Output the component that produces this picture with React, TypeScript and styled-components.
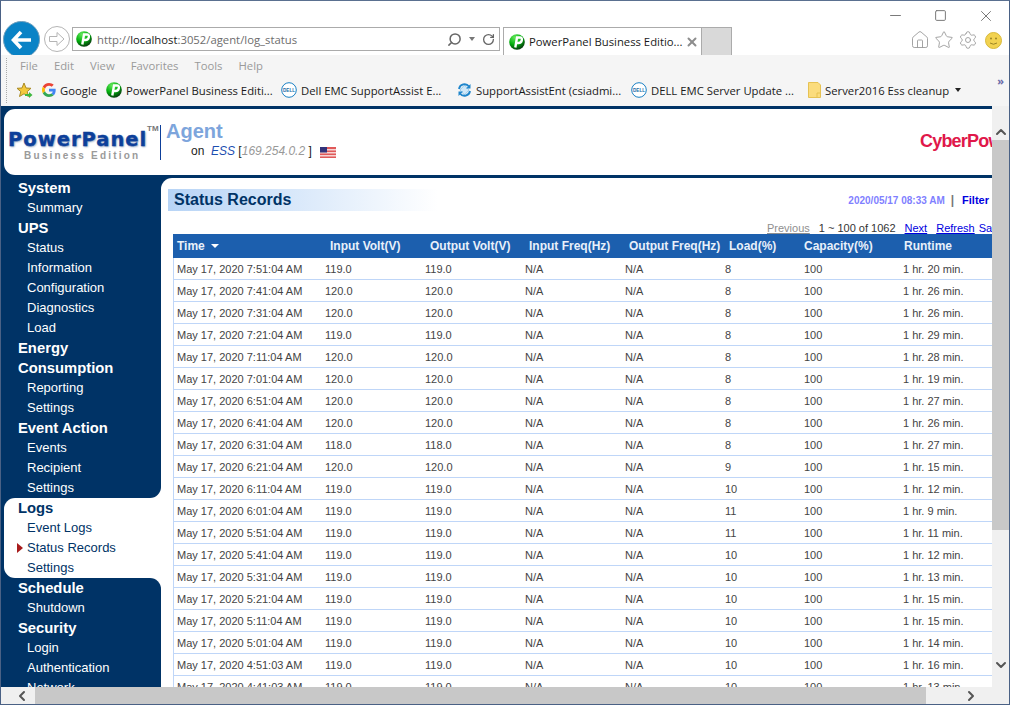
import React from "react";
import styled, { createGlobalStyle } from "styled-components";
import { Home, Star, Settings, Search, RotateCw, ChevronUp, ChevronDown, ChevronLeft, ChevronRight, Minus, Square, X } from "lucide-react";

const GlobalStyle = createGlobalStyle`
  html, body { margin: 0; padding: 0; background: #fff; overflow: hidden; }
  * { box-sizing: border-box; }
`;

const Frame = styled.div`
  width: 1010px;
  height: 705px;
  display: flex;
  flex-direction: column;
  border: 1px solid #4a6185;
  border-top-color: #5a7090;
  overflow: hidden;
  background: #fff;
  font-family: "Liberation Sans", Arial, sans-serif;
`;

/* browser chrome */
const TopBar = styled.div`
  height: 54px;
  flex-shrink: 0;
  display: flex;
  justify-content: space-between;
  overflow: hidden;
  font-family: "Open Sans", "Noto Sans", sans-serif;
`;

const NavCluster = styled.div`
  display: flex;
  align-items: flex-start;
  padding: 20px 0 0 2px;
`;

const BackButton = styled.div`
  width: 37px;
  height: 37px;
  border-radius: 50%;
  background: #0a83c6;
  border: 1px solid #6f9fbd;
  display: flex;
  align-items: center;
  justify-content: center;
`;

const ForwardButton = styled.div`
  width: 26px;
  height: 26px;
  margin: 5px 2px 0 4px;
  border-radius: 50%;
  border: 1px solid #b5b5b5;
  display: flex;
  align-items: center;
  justify-content: center;
`;

const AddressBar = styled.div`
  width: 428px;
  height: 24px;
  margin-top: 6px;
  border: 1px solid #ababab;
  display: flex;
  align-items: center;
  padding: 0 4px 0 3px;
  font-size: 11.3px;
  color: #6d6d6d;
  gap: 5px;
`;

const Url = styled.span`
  flex: 1;
  white-space: nowrap;
  b { color: #1a1a1a; font-weight: 400; }
`;

const AddressTool = styled.span`
  display: flex;
  align-items: center;
  color: #666;
`;

const Caret = styled.span<{ $color?: string }>`
  width: 0;
  height: 0;
  border-left: 3.5px solid transparent;
  border-right: 3.5px solid transparent;
  border-top: 4px solid ${(p) => p.$color || "#777"};
  margin: 0 7px;
`;

const FavCaret = styled(Caret)`
  margin: 0 0 0 2px;
`;

const Tab = styled.div`
  width: 199px;
  height: 28px;
  margin: 6px 0 0 3px;
  border: 1px solid #ababab;
  border-bottom: none;
  background: #fff;
  display: flex;
  align-items: center;
  padding: 0 5px;
  gap: 4px;
  font-size: 11.3px;
  color: #1a1a1a;
  white-space: nowrap;
`;

const TabClose = styled.span`
  margin-left: -2px;
  display: flex;
  color: #8d8d8d;
`;

const NewTab = styled.div`
  width: 30px;
  height: 28px;
  margin-top: 6px;
  background: #d9d9d9;
  border: 1px solid #ababab;
  border-width: 1px 1px 0 0;
`;

const RightCluster = styled.div`
  display: flex;
  flex-direction: column;
  align-items: flex-end;
`;

const WindowControls = styled.div`
  display: flex;
  height: 29px;
  padding-right: 1px;
  color: #7a7a7a;
`;

const WindowButton = styled.div`
  width: 45px;
  display: flex;
  align-items: center;
  justify-content: center;
`;

const ToolIcons = styled.div`
  display: flex;
  align-items: center;
  gap: 4px;
  color: #9b9b9b;
  padding-right: 7px;
`;

const SmileySvg = styled.svg`
  margin-left: 3px;
`;

const ToolBars = styled.div`
  height: 51px;
  flex-shrink: 0;
  background: #f5f5f5;
  padding-left: 19px;
  position: relative;
  font-family: "Open Sans", "Noto Sans", sans-serif;
  font-size: 11.3px;
`;

const Gripper = styled.div`
  position: absolute;
  left: 5px;
  top: 3px;
  bottom: 3px;
  border-left: 1px dotted #aaa;
`;

const MenuRow = styled.div`
  height: 21px;
  display: flex;
  align-items: center;
  gap: 16px;
  color: #9a9a9a;
`;

const FavRow = styled.div`
  height: 28px;
  margin-left: -4px;
  display: flex;
  align-items: center;
  color: #1a1a1a;
  white-space: nowrap;
`;

const FavItem = styled.div<{ $width: number }>`
  width: ${(p) => p.$width}px;
  display: flex;
  align-items: center;
  gap: 4px;
  flex-shrink: 0;
`;

const Overflow = styled.span`
  position: absolute;
  right: 5px;
  top: 18px;
  font-size: 11px;
  color: #6a6aa8;
  font-weight: 700;
`;

/* page */
const PageRow = styled.div`
  flex: 1;
  min-height: 0;
  display: flex;
`;

const Page = styled.div`
  flex: 1;
  min-width: 0;
  background: #003366;
  padding-top: 3px;
  display: flex;
  flex-direction: column;
  overflow: hidden;
`;

const Header = styled.div`
  height: 66px;
  flex-shrink: 0;
  margin: 0 0 3px 3px;
  background: #fff;
  border-radius: 11px 0 0 11px;
  display: flex;
  align-items: flex-start;
`;

const Logo = styled.div`
  width: 156px;
  padding: 21px 0 0 4px;
  position: relative;
`;

const LogoName = styled.div`
  font-family: "DejaVu Sans", sans-serif;
  font-weight: 700;
  font-size: 19.5px;
  letter-spacing: 1px;
  line-height: 20px;
  color: #0d3f9a;
  -webkit-text-stroke: 0.4px #0d3f9a;
  text-shadow: 1px 1px 2px #8fa3c0;
  white-space: nowrap;
`;

const Trademark = styled.span`
  position: absolute;
  left: 143px;
  top: 15px;
  font-size: 8px;
  font-weight: 700;
  color: #777;
`;

const LogoEdition = styled.div`
  font-size: 10px;
  font-weight: 700;
  letter-spacing: 2.2px;
  line-height: 11px;
  color: #9a9a9a;
  white-space: nowrap;
  padding-left: 16px;
`;

const LogoRule = styled.div`
  width: 1px;
  height: 35px;
  margin-top: 16px;
  background: #0d3f9a;
`;

const AgentBlock = styled.div`
  padding: 11px 0 0 5px;
`;

const AgentTitle = styled.div`
  font-size: 20px;
  font-weight: 700;
  line-height: 23px;
  color: #7da5dc;
`;

const AgentLine = styled.div`
  display: flex;
  align-items: center;
  padding: 1px 0 0 25px;
  font-size: 12px;
  line-height: 14px;
  color: #222;
  white-space: pre;
  em { color: #1c4fb0; }
`;

const AgentIp = styled.em`
  && { color: #999; }
`;

const Flag = styled.svg`
  margin: 3px 0 0 8px;
`;

const CyberLogo = styled.div`
  margin: 20px 0 0 auto;
  width: 72px;
  overflow: hidden;
  white-space: nowrap;
  font-size: 18px;
  line-height: 24px;
  font-weight: 700;
  letter-spacing: -0.8px;
  color: #e0184a;
`;

const Body = styled.div`
  flex: 1;
  min-height: 0;
  display: flex;
`;

const Sidebar = styled.div`
  width: 160px;
  flex-shrink: 0;
  background: #fff;
  overflow: hidden;
`;

const NavGroup = styled.div<{ $round?: string }>`
  background: #003366;
  border-radius: ${(p) => p.$round || "0"};
  padding-left: 17px;
  color: #fff;
`;

const ActiveBack = styled.div`
  background: #003366;
  padding-left: 3px;
`;

const ActiveGroup = styled.div`
  background: #fff;
  border-radius: 11px 0 0 11px;
  padding-left: 14px;
  color: #003366;
`;

const NavTitle = styled.div`
  height: 20px;
  line-height: 20px;
  font-size: 14.8px;
  font-weight: 700;
  white-space: nowrap;
`;

const NavLink = styled.div`
  height: 20px;
  line-height: 19px;
  font-size: 13px;
  padding-left: 9px;
  white-space: nowrap;
  position: relative;
`;

const Marker = styled.span`
  position: absolute;
  left: -1px;
  top: 5px;
  border-left: 6px solid #a81c1c;
  border-top: 5px solid transparent;
  border-bottom: 5px solid transparent;
`;

const Main = styled.div`
  flex: 1;
  min-width: 0;
  background: #fff;
  border-radius: 11px 0 0 0;
  padding-top: 11px;
  overflow: hidden;
`;

const TitleRow = styled.div`
  display: flex;
  align-items: center;
  justify-content: space-between;
  padding: 0 3px 0 7px;
  height: 22px;
`;

const PageTitle = styled.div`
  width: 270px;
  height: 22px;
  padding-left: 6px;
  line-height: 21px;
  font-size: 16px;
  font-weight: 700;
  color: #003366;
  background: linear-gradient(90deg, #b7d4f6, #fff);
`;

const Stamp = styled.div`
  display: flex;
  align-items: center;
  font-size: 10px;
  font-weight: 700;
  color: #7f7fff;
  white-space: pre;
`;

const Separator = styled.span`
  margin: 0 8px 0 6px;
  font-size: 12px;
  color: #777;
`;

const FilterLink = styled.span`
  font-size: 11px;
  color: #0000e0;
`;

const Pager = styled.div`
  height: 13px;
  margin-top: 10px;
  padding-left: 606px;
  display: flex;
  align-items: center;
  font-size: 11px;
  color: #333;
  white-space: nowrap;
`;

const PagerLink = styled.span<{ $gap: number; $off?: boolean }>`
  margin-left: ${(p) => p.$gap}px;
  text-decoration: underline;
  color: ${(p) => (p.$off ? "#8f8f8f" : "#0000e0")};
`;

const PagerPlain = styled.span`
  margin-left: 9px;
`;

const PagerSave = styled.span`
  margin-left: 4px;
  color: #0000e0;
`;

const Table = styled.table`
  margin: 0 0 0 12px;
  width: 826px;
  table-layout: fixed;
  border-collapse: separate;
  border-spacing: 0;
  font-size: 11px;
`;

const Head = styled.th<{ $inset: number; $width: number }>`
  width: ${(p) => p.$width}px;
  height: 24px;
  padding: 0 0 0 ${(p) => p.$inset}px;
  background: #1c5fae;
  color: #e8f0fa;
  font-size: 12px;
  text-align: left;
  white-space: nowrap;
  font-weight: 700;
`;

const SortCaret = styled.span`
  display: inline-block;
  margin: 0 0 2px 6px;
  border-left: 4px solid transparent;
  border-right: 4px solid transparent;
  border-top: 4px solid #fff;
`;

const Row = styled.tr`
  height: 22px;
`;

const Cell = styled.td`
  padding: 0 0 0 4px;
  border-bottom: 1px solid #bfd6f8;
  color: #444;
  white-space: nowrap;
  &:first-child {
    border-left: 1px solid #bfd6f8;
    padding-left: 3px;
  }
`;

/* scrollbars */
const VScroll = styled.div`
  width: 17px;
  flex-shrink: 0;
  background: #f0f0f0;
  display: flex;
  flex-direction: column;
  color: #555;
`;

const VThumb = styled.div`
  width: 17px;
  height: 390px;
  margin-bottom: auto;
  background: #c8c8c8;
`;

const ArrowBox = styled.div`
  height: 44px;
  flex-shrink: 0;
  display: flex;
  align-items: center;
  justify-content: center;
`;

const VArrowTop = styled(ArrowBox)`
  height: 34px;
  align-items: flex-end;
`;

const HScroll = styled.div`
  height: 17px;
  flex-shrink: 0;
  background: #f0f0f0;
  display: flex;
  align-items: stretch;
  justify-content: flex-start;
  color: #555;
`;

const HArrow = styled.div`
  width: 34px;
  display: flex;
  align-items: center;
  justify-content: center;
  flex-shrink: 0;
`;

const HArrowLeft = styled(HArrow)`
  padding-left: 8px;
`;

const HArrowRight = styled(HArrow)`
  margin: 0 21px 0 auto;
`;

const HThumb = styled.div`
  width: 891px;
  background: #c8c8c8;
`;

const PIcon = ({ size = 16 }: { size?: number }) => (
  <svg width={size} height={size} viewBox="0 0 16 16" style={{ flexShrink: 0 }}>
    <defs>
      <radialGradient id="pp" cx="35%" cy="20%" r="85%">
        <stop offset="0%" stopColor="#62e85a" />
        <stop offset="55%" stopColor="#00ad0c" />
        <stop offset="100%" stopColor="#08300e" />
      </radialGradient>
    </defs>
    <circle cx="8" cy="8" r="7.8" fill="url(#pp)" />
    <path d="M6.3 13.5 L8 3.5 H11 Q13.3 3.5 12.8 6.2 Q12.3 9 9.5 9 H7.5" fill="none" stroke="#fff" strokeWidth="2.4" />
  </svg>
);

const DellIcon = () => (
  <svg width="16" height="16" viewBox="0 0 16 16" style={{ flexShrink: 0 }}>
    <circle cx="8" cy="8" r="7.3" fill="#fff" stroke="#1a80c4" strokeWidth="1" />
    <text x="8" y="9.6" textAnchor="middle" fontSize="4.6" fontWeight="700" fill="#1a6ea8" fontFamily="Liberation Sans">DELL</text>
  </svg>
);

const FavStar = () => (
  <svg width="17" height="17" viewBox="0 0 17 17" style={{ flexShrink: 0 }}>
    <path d="M8 1 L10 6 L15 6.3 L11.2 9.6 L12.5 14.5 L8 11.8 L3.5 14.5 L4.8 9.6 L1 6.3 L6 6 Z" fill="#f4c93c" stroke="#a98a25" strokeWidth="1" />
    <path d="M9 12 H13 V10 L16.5 13 L13 16 V14 H9 Z" fill="#3fb83f" />
  </svg>
);

const GoogleIcon = () => (
  <svg width="14" height="14" viewBox="0 0 48 48" style={{ flexShrink: 0 }}>
    <path fill="#EA4335" d="M24 9.5c3.5 0 6.7 1.2 9.2 3.6l6.9-6.9C35.9 2.4 30.5 0 24 0 14.6 0 6.5 5.4 2.6 13.2l8 6.2C12.5 13.7 17.8 9.5 24 9.5z" />
    <path fill="#4285F4" d="M46.9 24.5c0-1.6-.1-3.1-.4-4.5H24v9h12.9c-.6 3-2.2 5.5-4.8 7.2l7.7 6c4.5-4.2 7.1-10.3 7.1-17.7z" />
    <path fill="#FBBC05" d="M10.6 28.6A14.5 14.5 0 0 1 9.8 24c0-1.6.3-3.1.8-4.6l-8-6.2A24 24 0 0 0 0 24c0 3.9.9 7.5 2.6 10.8l8-6.2z" />
    <path fill="#34A853" d="M24 48c6.5 0 11.9-2.1 15.9-5.8l-7.7-6c-2.2 1.5-5 2.3-8.2 2.3-6.2 0-11.5-4.2-13.4-9.9l-8 6.2C6.5 42.6 14.6 48 24 48z" />
  </svg>
);

const SyncIcon = () => (
  <svg width="15" height="16" viewBox="0 0 15 16" style={{ flexShrink: 0 }}>
    <path d="M7.5 3 L12 8 L7.5 13 L3 8 Z" fill="#cfe8f8" stroke="#7fbce4" strokeWidth="0.7" />
    <path d="M2 7 A5.6 5.6 0 0 1 12 4.5 M13 9 A5.6 5.6 0 0 1 3 11.5" fill="none" stroke="#1f86cc" strokeWidth="1.9" />
    <path d="M13.5 2 V6.5 H9 Z M1.5 14 V9.5 H6 Z" fill="#1f86cc" />
  </svg>
);

const FolderIcon = () => (
  <svg width="13" height="16" viewBox="0 0 13 16" style={{ flexShrink: 0 }}>
    <path d="M.5.5 H10 L12.5 3 V15.5 H.5 Z" fill="#fbdc7d" stroke="#e6c253" />
    <path d="M9 15 V11 H12.5" fill="none" stroke="#e6c253" />
  </svg>
);

const Smiley = () => (
  <SmileySvg width="17" height="17" viewBox="0 0 17 17">
    <circle cx="8.5" cy="8.5" r="8" fill="#f2d250" stroke="#d8b93a" />
    <circle cx="6" cy="6.5" r="1" fill="#9a8426" />
    <circle cx="11" cy="6.5" r="1" fill="#9a8426" />
    <path d="M5 11 Q8.5 13.5 12 11" fill="none" stroke="#9a8426" />
  </SmileySvg>
);

const UsFlag = () => (
  <Flag width="16" height="11" viewBox="0 0 16 11">
    <rect width="16" height="11" fill="#e05a5a" />
    <rect y="2" width="16" height="1.5" fill="#f6d4d4" />
    <rect y="5" width="16" height="1.5" fill="#f6d4d4" />
    <rect y="8" width="16" height="1.5" fill="#f6d4d4" />
    <rect width="7" height="5.5" fill="#33337a" />
  </Flag>
);

const rows = [
  ["May 17, 2020 7:51:04 AM", "119.0", "8", "1 hr. 20 min."],
  ["May 17, 2020 7:41:04 AM", "120.0", "8", "1 hr. 26 min."],
  ["May 17, 2020 7:31:04 AM", "120.0", "8", "1 hr. 26 min."],
  ["May 17, 2020 7:21:04 AM", "119.0", "8", "1 hr. 29 min."],
  ["May 17, 2020 7:11:04 AM", "120.0", "8", "1 hr. 28 min."],
  ["May 17, 2020 7:01:04 AM", "120.0", "8", "1 hr. 19 min."],
  ["May 17, 2020 6:51:04 AM", "120.0", "8", "1 hr. 27 min."],
  ["May 17, 2020 6:41:04 AM", "120.0", "8", "1 hr. 26 min."],
  ["May 17, 2020 6:31:04 AM", "118.0", "8", "1 hr. 27 min."],
  ["May 17, 2020 6:21:04 AM", "120.0", "9", "1 hr. 15 min."],
  ["May 17, 2020 6:11:04 AM", "119.0", "10", "1 hr. 12 min."],
  ["May 17, 2020 6:01:04 AM", "119.0", "11", "1 hr. 9 min."],
  ["May 17, 2020 5:51:04 AM", "119.0", "11", "1 hr. 11 min."],
  ["May 17, 2020 5:41:04 AM", "119.0", "10", "1 hr. 12 min."],
  ["May 17, 2020 5:31:04 AM", "119.0", "10", "1 hr. 13 min."],
  ["May 17, 2020 5:21:04 AM", "119.0", "10", "1 hr. 15 min."],
  ["May 17, 2020 5:11:04 AM", "119.0", "10", "1 hr. 15 min."],
  ["May 17, 2020 5:01:04 AM", "119.0", "10", "1 hr. 14 min."],
  ["May 17, 2020 4:51:03 AM", "119.0", "10", "1 hr. 16 min."],
  ["May 17, 2020 4:41:03 AM", "119.0", "10", "1 hr. 13 min."],
];

const columns = [
  { label: "Input Volt(V)", width: 100, inset: 9 },
  { label: "Output Volt(V)", width: 100, inset: 9 },
  { label: "Input Freq(Hz)", width: 100, inset: 8 },
  { label: "Output Freq(Hz)", width: 100, inset: 8 },
  { label: "Load(%)", width: 79, inset: 8 },
  { label: "Capacity(%)", width: 99, inset: 4 },
  { label: "Runtime", width: 100, inset: 5 },
];

const favourites = [
  { icon: <GoogleIcon />, label: "Google", width: 64 },
  { icon: <PIcon />, label: "PowerPanel Business Editi...", width: 175 },
  { icon: <DellIcon />, label: "Dell EMC SupportAssist E...", width: 176 },
  { icon: <SyncIcon />, label: "SupportAssistEnt (csiadmi...", width: 174 },
  { icon: <DellIcon />, label: "DELL EMC Server Update ...", width: 177 },
];

export default function App() {
  return (
    <>
      <GlobalStyle />
      <Frame>
        <TopBar>
          <NavCluster>
            <BackButton>
              <svg width="24" height="24" viewBox="0 0 24 24">
                <path d="M11 4 L3.5 12 L11 20 M4 12 H21" fill="none" stroke="#fff" strokeWidth="3.6" />
              </svg>
            </BackButton>
            <ForwardButton>
              <svg width="18" height="18" viewBox="0 0 18 18">
                <path d="M1.5 6.5 H9 V2.5 L16 9 L9 15.5 V11.5 H1.5 Z" fill="none" stroke="#b5b5b5" />
              </svg>
            </ForwardButton>
            <AddressBar>
              <PIcon />
              <Url>
                http://<b>localhost</b>:3052/agent/log_status
              </Url>
              <AddressTool>
                <Search size={15} strokeWidth={2.4} style={{ transform: "scaleX(-1)" }} />
                <Caret />
                <RotateCw size={13} strokeWidth={2.4} />
              </AddressTool>
            </AddressBar>
            <Tab>
              <PIcon />
              PowerPanel Business Editio...
              <TabClose>
                <X size={14} strokeWidth={3.4} />
              </TabClose>
            </Tab>
            <NewTab />
          </NavCluster>
          <RightCluster>
            <WindowControls>
              <WindowButton>
                <Minus size={17} strokeWidth={1} absoluteStrokeWidth />
              </WindowButton>
              <WindowButton>
                <Square size={13} strokeWidth={1} absoluteStrokeWidth />
              </WindowButton>
              <WindowButton>
                <X size={18} strokeWidth={1} absoluteStrokeWidth />
              </WindowButton>
            </WindowControls>
            <ToolIcons>
              <Home size={20} strokeWidth={1.1} />
              <Star size={20} strokeWidth={1.1} />
              <Settings size={20} strokeWidth={1.1} />
              <Smiley />
            </ToolIcons>
          </RightCluster>
        </TopBar>
        <ToolBars>
          <Gripper />
          <MenuRow>
            <span>File</span>
            <span>Edit</span>
            <span>View</span>
            <span>Favorites</span>
            <span>Tools</span>
            <span>Help</span>
          </MenuRow>
          <FavRow>
            <FavItem $width={26}>
              <FavStar />
            </FavItem>
            {favourites.map((f) => (
              <FavItem key={f.label} $width={f.width}>
                {f.icon}
                {f.label}
              </FavItem>
            ))}
            <FavItem $width={170}>
              <FolderIcon />
              Server2016 Ess cleanup
              <FavCaret $color="#222" />
            </FavItem>
          </FavRow>
          <Overflow>»</Overflow>
        </ToolBars>
        <PageRow>
          <Page>
            <Header>
              <Logo>
                <LogoName>PowerPanel</LogoName>
                <Trademark>TM</Trademark>
                <LogoEdition>Business Edition</LogoEdition>
              </Logo>
              <LogoRule />
              <AgentBlock>
                <AgentTitle>Agent</AgentTitle>
                <AgentLine>
                  on  <em>ESS</em> [<AgentIp>169.254.0.2</AgentIp> ]
                  <UsFlag />
                </AgentLine>
              </AgentBlock>
              <CyberLogo>CyberPower</CyberLogo>
            </Header>
            <Body>
              <Sidebar>
                <NavGroup $round="0 0 11px 0">
                  <NavTitle>System</NavTitle>
                  <NavLink>Summary</NavLink>
                  <NavTitle>UPS</NavTitle>
                  <NavLink>Status</NavLink>
                  <NavLink>Information</NavLink>
                  <NavLink>Configuration</NavLink>
                  <NavLink>Diagnostics</NavLink>
                  <NavLink>Load</NavLink>
                  <NavTitle>Energy</NavTitle>
                  <NavTitle>Consumption</NavTitle>
                  <NavLink>Reporting</NavLink>
                  <NavLink>Settings</NavLink>
                  <NavTitle>Event Action</NavTitle>
                  <NavLink>Events</NavLink>
                  <NavLink>Recipient</NavLink>
                  <NavLink>Settings</NavLink>
                </NavGroup>
                <ActiveBack>
                  <ActiveGroup>
                    <NavTitle>Logs</NavTitle>
                    <NavLink>Event Logs</NavLink>
                    <NavLink>
                      <Marker />
                      Status Records
                    </NavLink>
                    <NavLink>Settings</NavLink>
                  </ActiveGroup>
                </ActiveBack>
                <NavGroup $round="0 11px 0 0">
                  <NavTitle>Schedule</NavTitle>
                  <NavLink>Shutdown</NavLink>
                  <NavTitle>Security</NavTitle>
                  <NavLink>Login</NavLink>
                  <NavLink>Authentication</NavLink>
                  <NavLink>Network</NavLink>
                </NavGroup>
              </Sidebar>
              <Main>
                <TitleRow>
                  <PageTitle>Status Records</PageTitle>
                  <Stamp>
                    2020/05/17 08:33 AM
                    <Separator>|</Separator>
                    <FilterLink>Filter</FilterLink>
                  </Stamp>
                </TitleRow>
                <Pager>
                  <PagerLink $gap={0} $off>Previous</PagerLink>
                  <PagerPlain>1 ~ 100 of 1062</PagerPlain>
                  <PagerLink $gap={9}>Next</PagerLink>
                  <PagerLink $gap={9}>Refresh</PagerLink>
                  <PagerSave>Save</PagerSave>
                </Pager>
                <Table>
                  <thead>
                    <tr>
                      <Head $inset={4} $width={148}>
                        Time
                        <SortCaret />
                      </Head>
                      {columns.map((c) => (
                        <Head key={c.label} $inset={c.inset} $width={c.width}>
                          {c.label}
                        </Head>
                      ))}
                    </tr>
                  </thead>
                  <tbody>
                    {rows.map((r) => (
                      <Row key={r[0]}>
                        <Cell>{r[0]}</Cell>
                        <Cell>{r[1]}</Cell>
                        <Cell>{r[1]}</Cell>
                        <Cell>N/A</Cell>
                        <Cell>N/A</Cell>
                        <Cell>{r[2]}</Cell>
                        <Cell>100</Cell>
                        <Cell>{r[3]}</Cell>
                      </Row>
                    ))}
                  </tbody>
                </Table>
              </Main>
            </Body>
          </Page>
          <VScroll>
            <VArrowTop>
              <ChevronUp size={16} strokeWidth={3} />
            </VArrowTop>
            <VThumb />
            <ArrowBox>
              <ChevronDown size={16} strokeWidth={3} />
            </ArrowBox>
          </VScroll>
        </PageRow>
        <HScroll>
          <HArrowLeft>
            <ChevronLeft size={16} strokeWidth={3} />
          </HArrowLeft>
          <HThumb />
          <HArrowRight>
            <ChevronRight size={16} strokeWidth={3} />
          </HArrowRight>
        </HScroll>
      </Frame>
    </>
  );
}
